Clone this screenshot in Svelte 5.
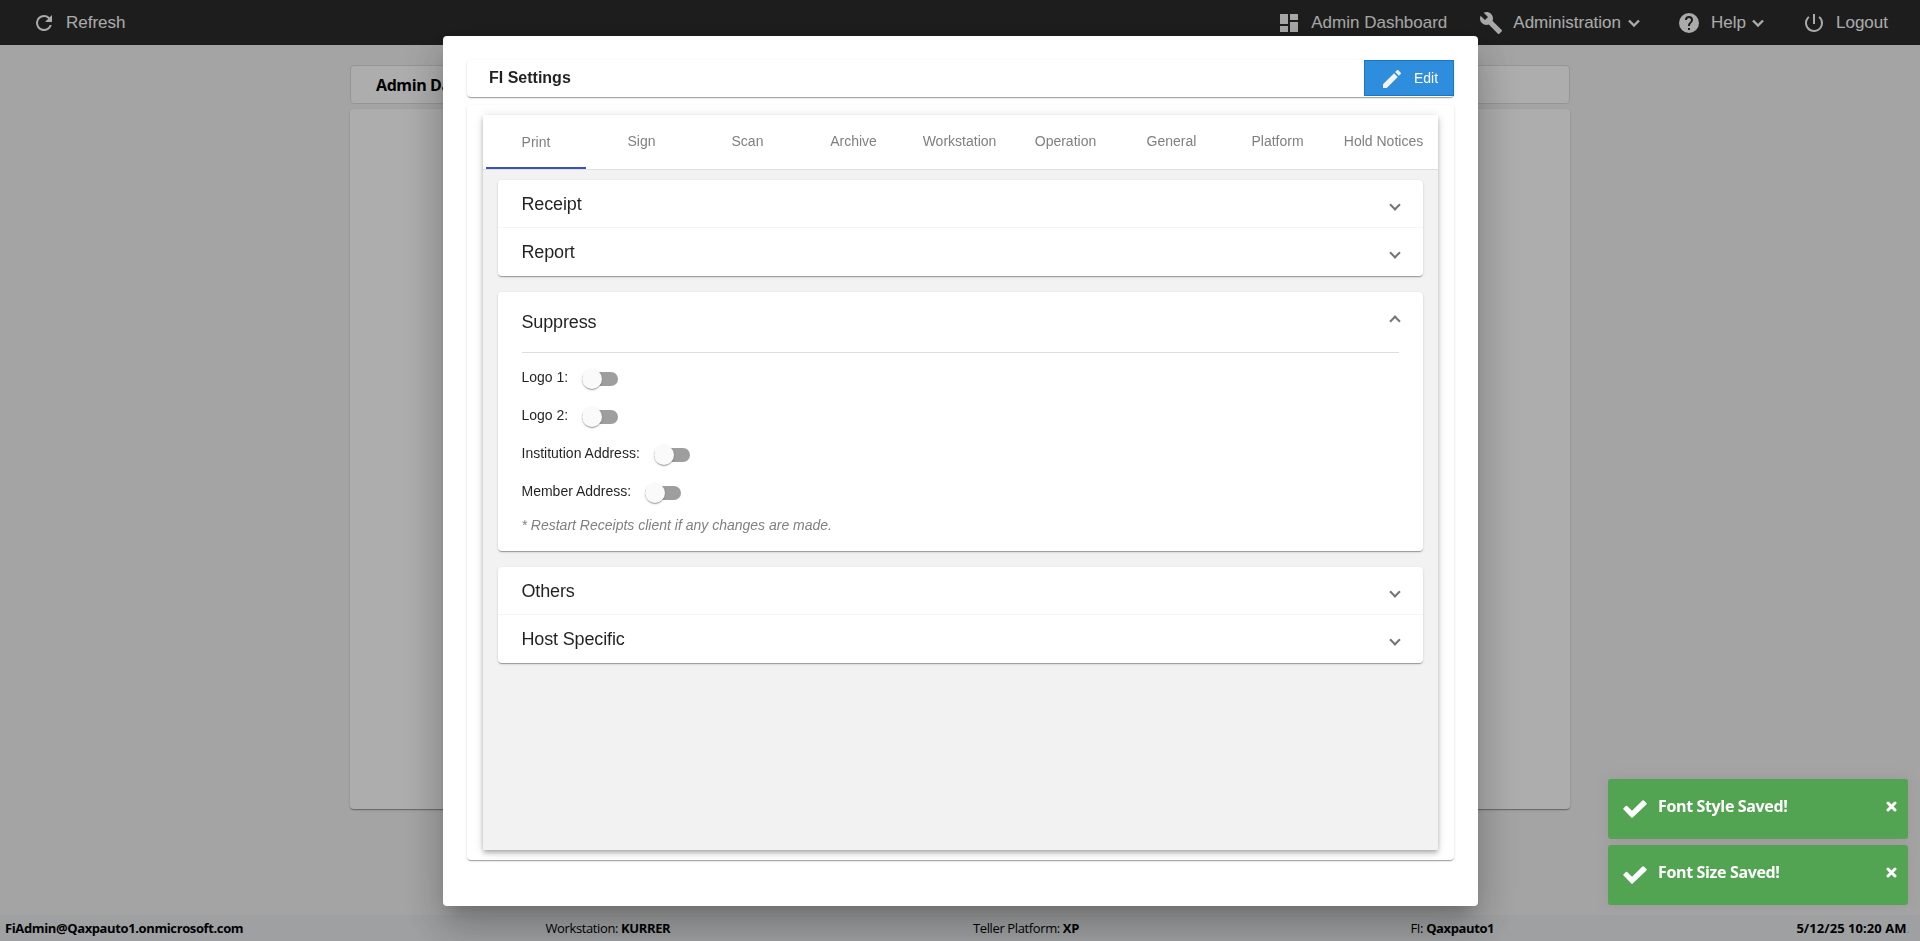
<script lang="ts">
  let tabs = [
    "Print",
    "Sign",
    "Scan",
    "Archive",
    "Workstation",
    "Operation",
    "General",
    "Platform",
    "Hold Notices",
  ];
  let activeTab = "Print";

  let suppressOpen = true;
  let suppress = [
    { label: "Logo 1:", on: false },
    { label: "Logo 2:", on: false },
    { label: "Institution Address:", on: false },
    { label: "Member Address:", on: false },
  ];

  let toasts = ["Font Style Saved!", "Font Size Saved!"];

  function closeToast(message: string) {
    toasts = toasts.filter((t) => t !== message);
  }
</script>

<div class="page">
  <header class="topbar">
    <div class="nav-item refresh">
      <svg viewBox="0 0 24 24">
        <path
          d="M17.65 6.35A7.96 7.96 0 0 0 12 4a8 8 0 1 0 7.73 10h-2.08A6 6 0 1 1 12 6c1.66 0 3.14.69 4.22 1.78L13 11h7V4z"
        />
      </svg>
      <span>Refresh</span>
    </div>
    <div class="nav-item dashboard">
      <svg viewBox="0 0 24 24">
        <path d="M3 13h8V3H3zm0 8h8v-6H3zm10 0h8V11h-8zm0-18v6h8V3z" />
      </svg>
      <span>Admin Dashboard</span>
    </div>
    <div class="nav-item administration">
      <svg viewBox="0 0 24 24">
        <path
          d="M22.7 19l-9.1-9.1c.9-2.3.4-5-1.5-6.9-2-2-5-2.4-7.4-1.3L9 6 6 9 1.6 4.7C.4 7.1.9 10.1 2.9 12.1c1.9 1.9 4.6 2.4 6.9 1.5l9.1 9.1c.4.4 1 .4 1.4 0l2.3-2.3c.5-.4.5-1.1.1-1.4z"
        />
      </svg>
      <span>Administration</span>
      <svg class="caret" viewBox="0 0 14 14"><path d="M2 4.5l5 5 5-5" /></svg>
    </div>
    <div class="nav-item help">
      <svg viewBox="0 0 24 24">
        <path
          d="M12 2a10 10 0 1 0 0 20 10 10 0 0 0 0-20zm1 17h-2v-2h2zm2.07-7.75l-.9.92C13.45 12.9 13 13.5 13 15h-2v-.5c0-1.1.45-2.1 1.17-2.83l1.24-1.26A2 2 0 1 0 10 9H8a4 4 0 1 1 8 0c0 .88-.36 1.68-.93 2.25z"
        />
      </svg>
      <span>Help</span>
      <svg class="caret" viewBox="0 0 14 14"><path d="M2 4.5l5 5 5-5" /></svg>
    </div>
    <div class="nav-item logout">
      <svg viewBox="0 0 24 24">
        <path
          d="M13 3h-2v10h2zm4.83 2.17l-1.42 1.42A6.92 6.92 0 0 1 19 12a7 7 0 1 1-11.42-5.42L6.17 5.17A9 9 0 1 0 21 12a8.94 8.94 0 0 0-3.17-6.83z"
        />
      </svg>
      <span>Logout</span>
    </div>
  </header>

  <main>
    <div class="page-title">Admin Dashboard</div>
    <div class="page-card"></div>
  </main>

  <footer>
    <b class="user">FiAdmin@Qaxpauto1.onmicrosoft.com</b>
    <span>Workstation: <b>KURRER</b></span>
    <span>Teller Platform: <b>XP</b></span>
    <span>FI: <b>Qaxpauto1</b></span>
    <span class="date"><b>5/12/25 10:20 AM</b><span class="dot">.</span></span>
  </footer>
</div>

<div class="backdrop">
  <section class="dialog">
    <div class="dialog-title">
      <h1>FI Settings</h1>
      <button class="edit-btn">
        <svg viewBox="0 0 24 24">
          <path
            d="M3 17.25V21h3.75L17.81 9.94l-3.75-3.75zM20.71 7.04a1 1 0 0 0 0-1.41l-2.34-2.34a1 1 0 0 0-1.41 0l-1.83 1.83 3.75 3.75z"
          />
        </svg>
        <span>Edit</span>
      </button>
    </div>

    <div class="dialog-card">
      <div class="tab-card">
        <nav>
          {#each tabs as tab}
            <button
              class="tab"
              class:active={tab === activeTab}
              on:click={() => (activeTab = tab)}
            >
              {tab}
            </button>
          {/each}
        </nav>

        <div class="panels">
          <div class="accordion">
            <div class="panel-header">Receipt <i class="arrow"></i></div>
            <div class="panel-header">Report <i class="arrow"></i></div>
          </div>

          <div class="accordion">
            <!-- svelte-ignore a11y_click_events_have_key_events -->
            <!-- svelte-ignore a11y_no_static_element_interactions -->
            <div
              class="panel-header"
              class:open={suppressOpen}
              on:click={() => (suppressOpen = !suppressOpen)}
            >
              Suppress <i class="arrow"></i>
            </div>
            {#if suppressOpen}
              <div class="panel-body">
                {#each suppress as item}
                  <label class="toggle-row">
                    <span>{item.label}</span>
                    <input type="checkbox" bind:checked={item.on} />
                    <span class="track"><span class="thumb"></span></span>
                  </label>
                {/each}
                <p class="note">
                  * Restart Receipts client if any changes are made.
                </p>
              </div>
            {/if}
          </div>

          <div class="accordion">
            <div class="panel-header">Others <i class="arrow"></i></div>
            <div class="panel-header">Host Specific <i class="arrow"></i></div>
          </div>
        </div>
      </div>
    </div>
  </section>
</div>

<div class="toasts">
  {#each toasts as toast}
    <div class="toast">
      <svg class="check" viewBox="0 0 24 18">
        <path
          d="M.6 8.2L2.8 6a1 1 0 0 1 1.4 0L9 10.8 19.4.5a1 1 0 0 1 1.4 0l2.6 2.5a1 1 0 0 1 0 1.4L9.7 17.6a1 1 0 0 1-1.4 0L.6 9.6a1 1 0 0 1 0-1.4z"
        />
      </svg>
      <span>{toast}</span>
      <button aria-label="Close" on:click={() => closeToast(toast)}>
        <svg viewBox="0 0 11 11"><path d="M2 2l7 7M9 2l-7 7" /></svg>
      </button>
    </div>
  {/each}
</div>

<style>
  :global(body) {
    overflow: hidden;
    font-family: "Liberation Sans", Arial, sans-serif;
  }

  .page {
    display: flex;
    flex-direction: column;
    height: 941px;
    background-color: #f2f2f2;
    font-family: "Open Sans", "Segoe UI", sans-serif;
  }

  /* Top bar */
  .topbar {
    display: flex;
    align-items: center;
    box-sizing: border-box;
    height: 45px;
    padding: 0 32px;
    background-color: #2c2c2c;
    color: #fbfbfb;
    font-family: "Liberation Sans", Arial, sans-serif;
    font-size: 17px;
  }

  .nav-item {
    display: flex;
    align-items: center;
    height: 45px;
    white-space: nowrap;
  }

  .nav-item svg {
    width: 24px;
    height: 24px;
    margin-right: 10px;
    fill: currentColor;
  }

  .nav-item .caret {
    width: 14px;
    height: 14px;
    margin: 1px 0 0 6px;
    fill: none;
    stroke: currentColor;
    stroke-width: 2.4;
  }

  .dashboard {
    margin-left: auto;
  }

  .administration {
    margin-left: 32px;
  }

  .help {
    margin-left: 36px;
  }

  .help .caret {
    margin-left: 5px;
  }

  .logout {
    margin-left: 37px;
  }

  /* Page behind the dialog */
  main {
    flex: 1;
    width: 1220px;
    margin: 0 auto;
    padding-top: 20px;
  }

  .page-title {
    box-sizing: border-box;
    height: 39px;
    padding-left: 25px;
    border: 1px solid #dcdcdc;
    border-radius: 4px;
    background-color: #fff;
    color: #000;
    font-size: 16px;
    font-weight: bold;
    line-height: 38px;
    letter-spacing: -0.4px;
  }

  .page-card {
    height: 700px;
    margin-top: 5px;
    border-radius: 4px;
    background-color: #fff;
    box-shadow:
      0 2px 1px -1px rgba(0, 0, 0, 0.2),
      0 1px 1px 0 rgba(0, 0, 0, 0.14),
      0 1px 3px 0 rgba(0, 0, 0, 0.12);
  }

  footer {
    display: grid;
    grid-template-columns: 540.5px 427.5px 437.5px 1fr auto;
    align-items: center;
    height: 26px;
    padding: 0 10px 0 5px;
    background-color: #e9ecef;
    color: #000;
    font-size: 13px;
    letter-spacing: -0.38px;
  }

  .date {
    letter-spacing: 0.05px;
  }

  .dot {
    color: #c4c6c9;
  }

  /* Dialog */
  .backdrop {
    position: fixed;
    inset: 0;
    display: flex;
    padding: 36px 0 0 443px;
    background-color: rgba(0, 0, 0, 0.32);
  }

  .dialog {
    display: flex;
    flex-direction: column;
    box-sizing: border-box;
    width: 1035px;
    height: 870px;
    padding: 24px;
    border-radius: 4px;
    background-color: #fff;
    color: rgba(0, 0, 0, 0.87);
    box-shadow:
      0 11px 15px -7px rgba(0, 0, 0, 0.2),
      0 24px 38px 3px rgba(0, 0, 0, 0.14),
      0 9px 46px 8px rgba(0, 0, 0, 0.12);
  }

  .dialog-title,
  .dialog-card,
  .accordion {
    border-radius: 4px;
    background-color: #fff;
    box-shadow:
      0 2px 1px -1px rgba(0, 0, 0, 0.2),
      0 1px 1px 0 rgba(0, 0, 0, 0.14),
      0 1px 3px 0 rgba(0, 0, 0, 0.12);
  }

  .dialog-title {
    display: flex;
    justify-content: space-between;
    height: 37px;
  }

  .dialog-title h1 {
    margin: 0;
    padding-left: 22px;
    font-size: 16px;
    font-weight: bold;
    line-height: 35px;
  }

  .edit-btn {
    display: flex;
    align-items: center;
    box-sizing: border-box;
    width: 90px;
    height: 36px;
    padding: 0 0 0 15px;
    border: 1px solid #1c76c4;
    background-color: #2f8ddd;
    color: #fff;
    font-family: inherit;
    font-size: 14px;
  }

  .edit-btn svg {
    width: 24px;
    height: 24px;
    margin: 1px 10px 0 0;
    fill: #f2f2f2;
  }

  .dialog-card {
    box-sizing: border-box;
    height: 755px;
    margin-top: 8px;
    padding: 10px 16px;
  }

  .tab-card {
    height: 735px;
    background-color: #f2f2f2;
    box-shadow:
      0 2px 4px -1px rgba(0, 0, 0, 0.2),
      0 4px 5px 0 rgba(0, 0, 0, 0.14),
      0 1px 10px 0 rgba(0, 0, 0, 0.12);
  }

  nav {
    display: flex;
    height: 54px;
    border-bottom: 1px solid #dedede;
    background-color: #fff;
  }

  .tab {
    display: flex;
    flex: 0 0 100px;
    align-items: center;
    justify-content: center;
    box-sizing: border-box;
    margin: 0 3px;
    padding: 0 1px 2px 0;
    border: none;
    background: none;
    color: #808080;
    font-family: inherit;
    font-size: 14px;
    white-space: nowrap;
  }

  .tab.active {
    padding: 2px 0 0;
    border-bottom: 2px solid #3f51b5;
  }

  .panels {
    display: flex;
    flex-direction: column;
    gap: 16px;
    padding: 10px 15px;
  }

  .panel-header {
    display: flex;
    align-items: center;
    justify-content: space-between;
    box-sizing: border-box;
    height: 48px;
    padding: 0 24px 0 23.5px;
    font-size: 18px;
    letter-spacing: -0.15px;
  }

  .panel-header:not(:last-child) {
    padding-top: 1px;
    border-bottom: 1px solid #f5f5f5;
  }

  .panel-header.open {
    height: 61px;
    margin: 0 24px 0 23.5px;
    padding: 0;
    border-bottom: 1px solid #dedede;
  }

  .arrow {
    width: 6px;
    height: 6px;
    margin-top: 1px;
    border: solid #757575;
    border-width: 0 2px 2px 0;
    transform: rotate(45deg);
  }

  .open .arrow {
    margin-top: -2px;
    transform: rotate(225deg);
  }

  .panel-body {
    box-sizing: border-box;
    height: 198px;
    padding: 7px 24px 0 23.5px;
    font-size: 14px;
  }

  .toggle-row {
    display: flex;
    align-items: center;
    height: 38px;
  }

  .toggle-row > span:first-child {
    margin: -4px 13.8px 0 0;
  }

  .toggle-row input {
    display: none;
  }

  .track {
    width: 36px;
    height: 14px;
    border-radius: 8px;
    background-color: #9e9e9e;
  }

  .thumb {
    display: block;
    width: 20px;
    height: 20px;
    margin-top: -3px;
    border-radius: 50%;
    background-color: #fafafa;
    box-shadow:
      0 2px 1px -1px rgba(0, 0, 0, 0.2),
      0 1px 1px 0 rgba(0, 0, 0, 0.14),
      0 1px 3px 0 rgba(0, 0, 0, 0.12);
  }

  input:checked + .track .thumb {
    margin-left: 16px;
    background-color: #3f51b5;
  }

  .note {
    margin: 4px 0 0;
    color: #808080;
    font-style: italic;
    line-height: 18px;
  }

  /* Toasts */
  .toasts {
    position: fixed;
    right: 12px;
    bottom: 36px;
    display: flex;
    flex-direction: column;
    gap: 6px;
  }

  .toast {
    display: flex;
    box-sizing: border-box;
    width: 300px;
    height: 60px;
    padding: 15px 11px 0 15px;
    border-radius: 3px;
    background-color: #52a352;
    box-shadow: 0 0 12px #999;
    color: #fff;
    font-family: "Open Sans", "Segoe UI", sans-serif;
    font-size: 16px;
    font-weight: bold;
    line-height: 24px;
    letter-spacing: -0.35px;
  }

  .check {
    width: 24px;
    height: 18px;
    margin: 6px 11px 0 0;
    fill: #fff;
  }

  .toast button {
    height: 11px;
    margin: 7px 0 0 auto;
    padding: 0;
    border: none;
    background: none;
    line-height: 0;
  }

  .toast button svg {
    width: 11px;
    height: 11px;
    stroke: #fff;
    stroke-width: 3;
    stroke-linecap: round;
  }
</style>
